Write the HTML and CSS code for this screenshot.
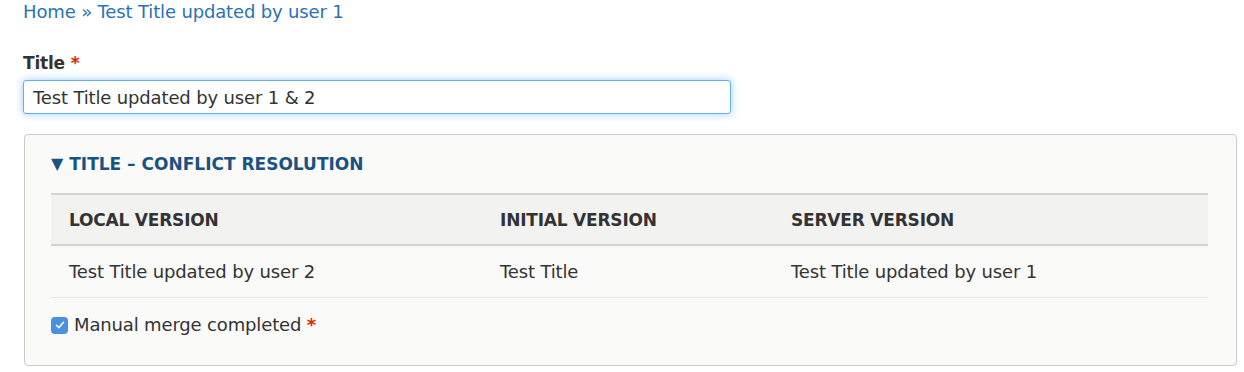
FILE: index.html
```html
<!DOCTYPE html>
<html lang="en">
<head>
    <meta charset="UTF-8">
    <title>Edit Test Title</title>
    <link rel="stylesheet" href="styles.css">
</head>
<body>
    <div class="breadcrumb">
        <a href="#">Home</a> » <a href="#">Test Title updated by user 1</a>
    </div>

    <div class="form-item">
        <label class="form-label" for="edit-title">Title <span class="required">*</span></label>
        <input type="text" id="edit-title" class="form-text" value="Test Title updated by user 1 &amp; 2">
    </div>

    <fieldset class="conflict">
        <legend class="conflict-legend"><span class="arrow">▼</span> Title – Conflict resolution</legend>

        <table class="versions">
            <thead>
                <tr>
                    <th class="col-local">Local version</th>
                    <th class="col-initial">Initial version</th>
                    <th>Server version</th>
                </tr>
            </thead>
            <tbody>
                <tr>
                    <td>Test Title updated by user 2</td>
                    <td>Test Title</td>
                    <td>Test Title updated by user 1</td>
                </tr>
            </tbody>
        </table>

        <div class="merge">
            <span class="checkbox">
                <svg width="12" height="12" viewBox="0 0 12 12"><path d="M2.5 6.3l2.3 2.4 4.7-5.4" fill="none" stroke="#fff" stroke-width="1.6" stroke-linecap="round" stroke-linejoin="round"/></svg>
            </span>
            <label>Manual merge completed <span class="required">*</span></label>
        </div>
    </fieldset>
</body>
</html>
```

FILE: styles.css
```css
body {
    font-family: "DejaVu Sans", Verdana, sans-serif;
    font-size: 18px;
    letter-spacing: -0.15px;
    color: #333;
    background: #fff;
    margin: 0;
    padding: 0 7px 0 23px;
}
a {
    color: #2a72b5;
    text-decoration: none;
}
.breadcrumb {
    color: #2a72b5;
    padding-top: 2px;
    line-height: 20px;
}
.form-item {
    margin-top: 31px;
}
.form-label {
    display: block;
    font-weight: bold;
    font-size: 17px;
    letter-spacing: -0.2px;
    line-height: 20px;
    margin-bottom: 7px;
}
.required {
    color: #e32700;
    font-weight: bold;
}
.form-text {
    display: block;
    width: 708px;
    height: 34px;
    box-sizing: border-box;
    border: 1px solid #62b0f2;
    border-radius: 3px;
    box-shadow: 0 0 9px #9ccffa;
    padding: 0 9px;
    font-family: inherit;
    font-size: 18px;
    letter-spacing: -0.15px;
    color: #333;
    outline: none;
}
.conflict {
    margin: 20px 0 0 1px;
    padding: 0 28px 0 26px;
    border: 1px solid #ccc;
    border-radius: 4px;
    background: #fafaf9;
    height: 232px;
    box-sizing: border-box;
}
.conflict-legend {
    float: left;
    width: 100%;
    padding: 18px 0 0;
    height: 58px;
    box-sizing: border-box;
    font-weight: bold;
    font-size: 17px;
    letter-spacing: 0;
    text-transform: uppercase;
    color: #1a5283;
    line-height: 22px;
}
.arrow {
    font-size: 16px;
    vertical-align: 1px;
}
.versions {
    width: 100%;
    border-collapse: collapse;
    clear: both;
}
.versions th {
    text-align: left;
    text-transform: uppercase;
    font-weight: bold;
    font-size: 17px;
    letter-spacing: -0.2px;
    background: #f2f2f1;
    border-top: 2px solid #d3d3d3;
    border-bottom: 2px solid #d3d3d3;
    height: 51px;
    padding: 0 18px;
    box-sizing: border-box;
}
.versions td {
    padding: 0 18px;
    height: 51px;
    border-bottom: 1px solid #e6e6e6;
}
.col-local {
    width: 431px;
}
.col-initial {
    width: 291px;
}
.merge {
    display: flex;
    align-items: center;
    gap: 6px;
    margin-top: 17px;
    line-height: 20px;
}
.checkbox {
    width: 17px;
    height: 17px;
    border-radius: 4px;
    background: #4a90e2;
    display: flex;
    align-items: center;
    justify-content: center;
}
```
